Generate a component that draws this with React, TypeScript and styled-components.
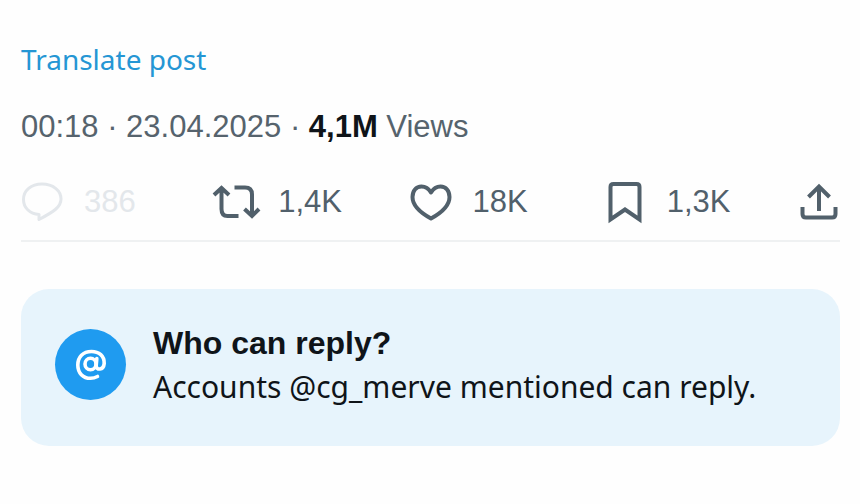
import React from "react";
import styled, { createGlobalStyle } from "styled-components";

const GlobalStyle = createGlobalStyle`
  * { box-sizing: border-box; }
  body {
    margin: 0;
    background: #fefefe;
    color: #0f1419;
    font-family: "Liberation Sans", sans-serif;
  }
`;

const Post = styled.main`
  padding: 39px 20px 40px 21px;
`;

const TranslateLink = styled.a`
  display: block;
  width: fit-content;
  font-family: "Noto Sans", sans-serif;
  font-size: 28px;
  line-height: 40px;
  color: #2596d4;
  text-decoration: none;
`;

const Meta = styled.p`
  margin: 28px 0 0;
  font-size: 31px;
  line-height: 40px;
  color: #56636d;

  strong {
    color: #0f1419;
  }
`;

const Actions = styled.div`
  display: grid;
  grid-template-columns: repeat(4, 1fr) 46px;
  align-items: center;
  height: 48px;
  margin: 31px -2px 14px;
`;

const ActionButton = styled.button<{ $muted?: boolean }>`
  display: flex;
  align-items: center;
  gap: 19px;
  padding: 0;
  border: 0;
  background: none;
  font-family: inherit;
  font-size: 31px;
  line-height: 48px;
  white-space: nowrap;
  color: ${(p) => (p.$muted ? "#e3e7eb" : "#51606b")};
  cursor: ${(p) => (p.$muted ? "default" : "pointer")};

  svg {
    flex: none;
    overflow: visible;
  }
`;

const Divider = styled.hr`
  height: 2px;
  margin: 0;
  border: 0;
  background: #eff1f2;
`;

const Notice = styled.section`
  display: flex;
  align-items: center;
  gap: 27px;
  margin-top: 47px;
  padding: 32px 34px 38px;
  border-radius: 28px;
  background: #e7f4fc;
`;

const Badge = styled.span`
  display: flex;
  flex: none;
  align-items: center;
  justify-content: center;
  width: 71px;
  height: 71px;
  border-radius: 50%;
  background: #1f9bf0;
  color: #fff;
`;

const NoticeTitle = styled.h2`
  margin: 0;
  font-size: 32px;
  line-height: 44px;
  font-weight: 700;
`;

const NoticeText = styled.p`
  margin: 0;
  font-family: "Noto Sans", sans-serif;
  font-size: 30px;
  line-height: 43px;
`;

const Icon = ({ children }: { children: React.ReactNode }) => (
  <svg width="46" height="44" viewBox="0 0 46 44" fill="none" stroke="currentColor" strokeWidth="4" aria-hidden="true">
    {children}
  </svg>
);

const ReplyIcon = () => (
  <Icon>
    <path strokeWidth="3" strokeLinejoin="round" d="M20 34.5C10.500 34 4.500 27.500 4.500 19.500C4.500 10.500 12 4 23 4S42 10.500 42 19C42 27 35 31.500 20 39.500Z" />
  </Icon>
);

const RepostIcon = () => (
  <Icon>
    <path d="M1 15L8.500 8L16 15M8.500 9V29Q8.500 36 14.500 36H25.500" />
    <path d="M21.500 7.500H32Q39 7.500 39 14.500V35M31.500 29L39 36L46 29" />
  </Icon>
);

const LikeIcon = () => (
  <Icon>
    <path strokeLinejoin="round" d="M23 12.500C20 7.500 16.500 6.500 13.500 6.500C8 6.500 4.500 11 4.500 17C4.500 26 12 32.500 23 38.500C34 32.500 41.500 26 41.500 17C41.500 11 38 6.500 32.500 6.500C29.500 6.500 26 7.500 23 12.500Z" />
  </Icon>
);

const BookmarkIcon = () => (
  <Icon>
    <path d="M8.500 39.500V7Q8.500 4 11.500 4H34.500Q37.500 4 37.500 7V39.500L23 29.500Z" />
  </Icon>
);

const ShareIcon = () => (
  <Icon>
    <path d="M12.500 17L23 6.500L33.500 17M23 8V31" />
    <path d="M6.500 27V34Q6.500 37.500 10 37.500H36Q39.500 37.500 39.500 34V27" />
  </Icon>
);

const MentionIcon = () => (
  <svg width="34" height="34" viewBox="0 0 34 34" fill="none" stroke="currentColor" strokeWidth="3.6" strokeLinecap="round" aria-hidden="true">
    <ellipse cx="16.500" cy="16" rx="5.500" ry="5.700" />
    <path d="M22.800 10.500L22.200 17.500C22 22.500 29.500 22.500 30.200 15.500C30.500 8 25 3.500 17.500 3.500C9 3.500 3.800 9 3.800 17C3.800 25 9 30.300 16.500 30.300Q20 30.300 23.500 28.500" />
  </svg>
);

const actions = [
  { label: "Reply", count: "386", icon: ReplyIcon, muted: true },
  { label: "Repost", count: "1,4K", icon: RepostIcon },
  { label: "Like", count: "18K", icon: LikeIcon },
  { label: "Bookmark", count: "1,3K", icon: BookmarkIcon },
  { label: "Share", icon: ShareIcon },
];

export default function App() {
  return (
    <>
      <GlobalStyle />
      <Post>
        <TranslateLink href="#translate">Translate post</TranslateLink>
        <Meta>
          00:18 · 23.04.2025 · <strong>4,1M</strong> Views
        </Meta>
        <Actions>
          {actions.map(({ label, count, icon: Glyph, muted }) => (
            <ActionButton
              key={label}
              type="button"
              aria-label={count ? `${label}, ${count}` : label}
              $muted={muted}
              disabled={muted}
            >
              <Glyph />
              {count}
            </ActionButton>
          ))}
        </Actions>
        <Divider />
        <Notice>
          <Badge>
            <MentionIcon />
          </Badge>
          <div>
            <NoticeTitle>Who can reply?</NoticeTitle>
            <NoticeText>Accounts @cg_merve mentioned can reply.</NoticeText>
          </div>
        </Notice>
      </Post>
    </>
  );
}
